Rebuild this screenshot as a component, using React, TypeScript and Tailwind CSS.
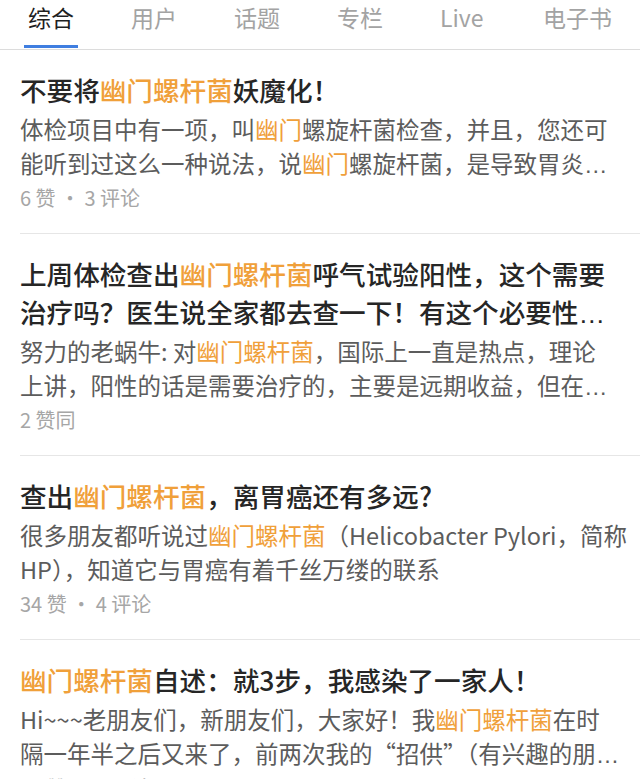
import React from "react";

const tabs = ["综合", "用户", "话题", "专栏", "Live", "电子书"];

type Piece = string | { hl: string } | { more: true };

type Item = {
  title: Piece[][];
  body: Piece[][];
  meta: string;
};

const more: Piece = { more: true };

const items: Item[] = [
  {
    title: [["不要将", { hl: "幽门螺杆菌" }, "妖魔化！"]],
    body: [
      ["体检项目中有一项，叫", { hl: "幽门" }, "螺旋杆菌检查，并且，您还可"],
      ["能听到过这么一种说法，说", { hl: "幽门" }, "螺旋杆菌，是导致胃炎", more],
    ],
    meta: "6 赞 · 3 评论",
  },
  {
    title: [
      ["上周体检查出", { hl: "幽门螺杆菌" }, "呼气试验阳性，这个需要"],
      ["治疗吗？医生说全家都去查一下！有这个必要性", more],
    ],
    body: [
      ["努力的老蜗牛: 对", { hl: "幽门螺杆菌" }, "，国际上一直是热点，理论"],
      ["上讲，阳性的话是需要治疗的，主要是远期收益，但在", more],
    ],
    meta: "2 赞同",
  },
  {
    title: [["查出", { hl: "幽门螺杆菌" }, "，离胃癌还有多远?"]],
    body: [
      ["很多朋友都听说过", { hl: "幽门螺杆菌" }, "（Helicobacter Pylori，简称"],
      ["HP），知道它与胃癌有着千丝万缕的联系"],
    ],
    meta: "34 赞 · 4 评论",
  },
  {
    title: [[{ hl: "幽门螺杆菌" }, "自述：就3步，我感染了一家人！"]],
    body: [
      ["Hi~~~老朋友们，新朋友们，大家好！我", { hl: "幽门螺杆菌" }, "在时"],
      ["隔一年半之后又来了，前两次我的“招供”（有兴趣的朋", more],
    ],
    meta: "12 赞 · 5 评论",
  },
];

const Line = ({ pieces }: { pieces: Piece[] }) => (
  <div className="whitespace-nowrap overflow-hidden">
    {pieces.map((p, i) => {
      if (typeof p === "string") return <span key={i}>{p}</span>;
      if ("hl" in p)
        return (
          <span key={i} className="text-[#f0a03a]">
            {p.hl}
          </span>
        );
      return (
        <span
          key={i}
          className="font-['Liberation_Sans',sans-serif] font-normal leading-[0px]"
        >
          …
        </span>
      );
    })}
  </div>
);

const App: React.FC = () => {
  return (
    <main className="w-[640px] h-[779px] overflow-hidden bg-white font-['Noto_Sans_CJK_SC',sans-serif]">
      <nav className="flex h-[50px] border-b border-[#dcdcdc] pl-[28px]">
        {tabs.map((t, i) => (
          <div key={t} className="relative w-[103px] shrink-0 pt-[5px]">
            <span
              className={
                i === 0
                  ? "text-[23px] leading-[25px] text-[#1f1f1f]"
                  : "text-[23px] leading-[25px] text-[#a3a3a3]"
              }
            >
              {t}
            </span>
            {i === 0 && (
              <div className="absolute left-[-4px] top-[45px] h-[3px] w-[54px] bg-[#3f7ee0]" />
            )}
          </div>
        ))}
      </nav>

      <section className="flex flex-col">
        {items.map((item, idx) => (
          <article
            key={idx}
            className="ml-5 border-b border-[#e6e6e6] pt-[21px] pb-[18px]"
          >
            <div className="text-[26.6px] leading-[38px] font-medium text-[#262626]">
              {item.title.map((l, i) => (
                <Line key={i} pieces={l} />
              ))}
            </div>
            <div className="mt-[3px] text-[23.5px] leading-[34px] text-[#5c5c5c]">
              {item.body.map((l, i) => (
                <Line key={i} pieces={l} />
              ))}
            </div>
            <div className="mt-[1px] text-[20px] leading-[34px] text-[#a6a6a6]">
              {item.meta}
            </div>
          </article>
        ))}
      </section>
    </main>
  );
};

export default App;
